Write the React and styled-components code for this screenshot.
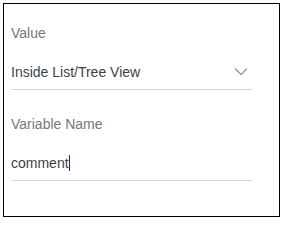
import styled, { createGlobalStyle } from "styled-components";

const GlobalStyle = createGlobalStyle`
    body {
        margin: 0;
        background: #fff;
        font-family: "Liberation Sans", Arial, sans-serif;
    }
`;

const Panel = styled.div`
    box-sizing: border-box;
    width: 277px;
    height: 214px;
    margin: 3px 0 0 3px;
    border: 1px solid #000;
    padding: 21px 27px 0 7px;
`;

const Field = styled.div`
    margin-bottom: ${props => props.$gap || 0}px;
`;

const Label = styled.div`
    font-size: 14px;
    line-height: 16px;
    color: #777;
    margin-bottom: 21px;
`;

const Control = styled.div`
    display: flex;
    align-items: center;
    justify-content: space-between;
    height: 27px;
    border-bottom: 1px solid #d6d6d6;
    font-size: 14px;
    color: #3c3f4a;
`;

const Value = styled.span`
    line-height: 16px;
    margin-top: -8px;
`;

const Caret = styled.span`
    display: inline-block;
    width: 1px;
    height: 16px;
    background: #1f2b5a;
    vertical-align: -3px;
`;

const Chevron = () => (
    <svg width="14" height="9" viewBox="0 0 14 9" style={{ marginTop: "-8px", marginRight: "4px" }}>
        <path d="M1 1.5 L7 7.5 L13 1.5" fill="none" stroke="#8a8a8a" strokeWidth="1.1" />
    </svg>
);

export default function App() {
    return (
        <>
            <GlobalStyle />
            <Panel>
                <Field $gap={26}>
                    <Label>Value</Label>
                    <Control>
                        <Value>Inside List/Tree View</Value>
                        <Chevron />
                    </Control>
                </Field>
                <Field>
                    <Label>Variable Name</Label>
                    <Control>
                        <Value>comment<Caret /></Value>
                    </Control>
                </Field>
            </Panel>
        </>
    );
}
